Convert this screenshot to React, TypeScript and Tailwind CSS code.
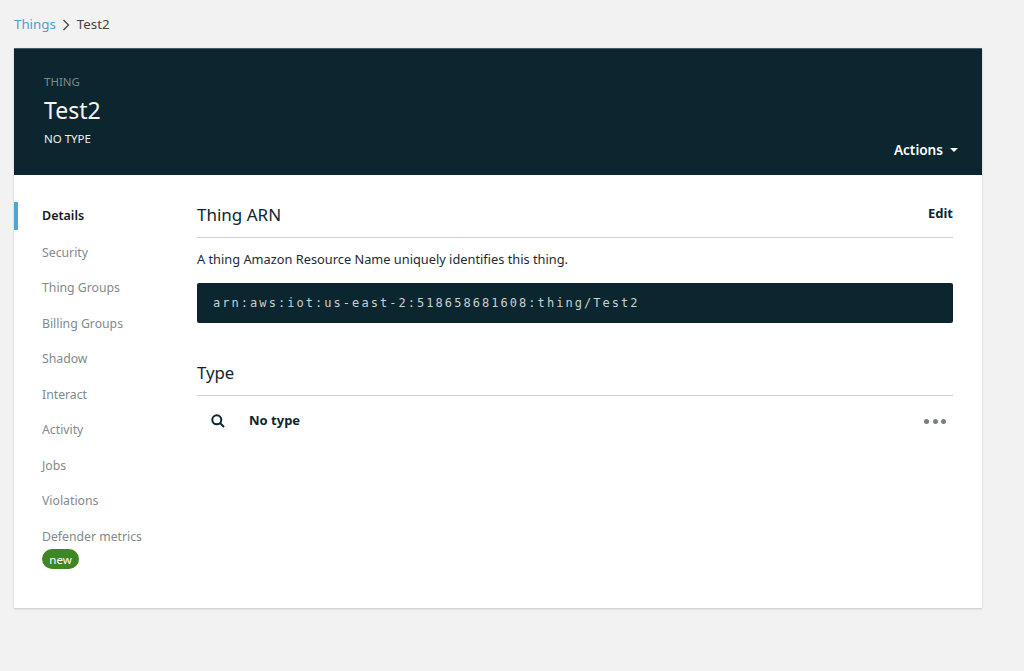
import React from 'react'

const NAV_ITEMS = ['Security', 'Thing Groups', 'Billing Groups', 'Shadow', 'Interact', 'Activity', 'Jobs', 'Violations']

export default function App() {
  return (
    <div className="min-h-[671px] bg-[#f2f2f2] pl-[14px] pr-[42px] font-['Noto_Sans',sans-serif] overflow-hidden">
      {/* Breadcrumb */}
      <div className="flex items-center h-[48px] pt-[1px] text-[13.3px] text-[#444]">
        <span className="text-[#4d9fc9]">Things</span>
        <svg width="8" height="12" viewBox="0 0 8 12" className="ml-[6px] mr-[7px]" fill="none" stroke="#444" strokeWidth="1.3">
          <path d="M1.5 1 L6.5 6 L1.5 11" />
        </svg>
        <span>Test2</span>
      </div>

      <div className="bg-white h-[560px] shadow-[0_1px_2px_rgba(0,0,0,0.18)]">
        {/* Header */}
        <div className="h-[127px] bg-[#0c2630] border-t border-[#4a5c66] relative pl-[30px] pt-[26px]">
          <div className="text-[11.5px] leading-[14px] text-[#7d8a90]">THING</div>
          <div className="text-[23px] leading-[30px] text-[#f4f4f4] mt-[6px]">Test2</div>
          <div className="text-[11.5px] leading-[14px] text-[#eeeeee] mt-[7px]">NO TYPE</div>
          <div className="absolute right-[24px] bottom-[16px] flex items-center gap-[7px] text-white text-[13.6px] leading-[18px] font-semibold">
            Actions
            <span className="w-0 h-0 border-x-[4px] border-x-transparent border-t-[4px] border-t-white" />
          </div>
        </div>

        <div className="flex">
          {/* Sidebar */}
          <div className="w-[183px] pt-[27px] shrink-0">
            <div className="border-l-[4px] border-[#4ba6d1] h-[28px] pl-[24px] flex items-center text-[12.5px] font-semibold text-[#16191f]">
              Details
            </div>
            <div className="flex flex-col gap-[17.5px] mt-[13.5px] pl-[28px]">
              {NAV_ITEMS.map((item) => (
                <div key={item} className="text-[12.25px] leading-[18px] text-[#818a8e]">
                  {item}
                </div>
              ))}
              <div>
                <div className="text-[12.25px] leading-[18px] text-[#818a8e]">Defender metrics</div>
                <span className="inline-flex items-center justify-center w-[37px] h-[20px] -mt-[1px] rounded-full bg-[#3f8624] text-white text-[11.5px]">
                  new
                </span>
              </div>
            </div>
          </div>

          {/* Main */}
          <div className="w-[756px] pt-[26px]">
            <div className="flex items-center justify-between h-[37px] border-b border-[#cfd2d3] pb-[9px]">
              <h2 className="text-[17px] text-[#0c2630]">Thing ARN</h2>
              <span className="text-[13px] font-bold text-[#0c2630] mb-[1px]">Edit</span>
            </div>
            <p className="mt-[12px] text-[12.8px] leading-[18px] text-[#1c2c34]">
              A thing Amazon Resource Name uniquely identifies this thing.
            </p>
            <div className="mt-[15px] h-[40px] rounded-[2px] bg-[#0c2630] flex items-center pl-[16px] font-['DejaVu_Sans_Mono',monospace] text-[12px] tracking-[2.05px] text-[#c9d0d0]">
              arn:aws:iot:us-east-2:518658681608:thing/Test2
            </div>
            <h2 className="mt-[36px] h-[37px] border-b border-[#cfd2d3] text-[16.8px] leading-[28px] text-[#0c2630]">Type</h2>
            <div className="flex items-center h-[50px]">
              <svg width="14" height="14" viewBox="0 0 14 14" className="ml-[14px]" fill="none" stroke="#0c2630" strokeWidth="2">
                <circle cx="5.8" cy="5.8" r="4.5" />
                <path d="M9 9 L13 13" />
              </svg>
              <span className="ml-[24px] text-[13px] font-bold text-[#0c2630]">No type</span>
              <div className="ml-auto mr-[7px] flex gap-[3.5px]">
                <span className="w-[5px] h-[5px] rounded-full bg-[#777f83]" />
                <span className="w-[5px] h-[5px] rounded-full bg-[#777f83]" />
                <span className="w-[5px] h-[5px] rounded-full bg-[#777f83]" />
              </div>
            </div>
          </div>
        </div>
      </div>
    </div>
  )
}
